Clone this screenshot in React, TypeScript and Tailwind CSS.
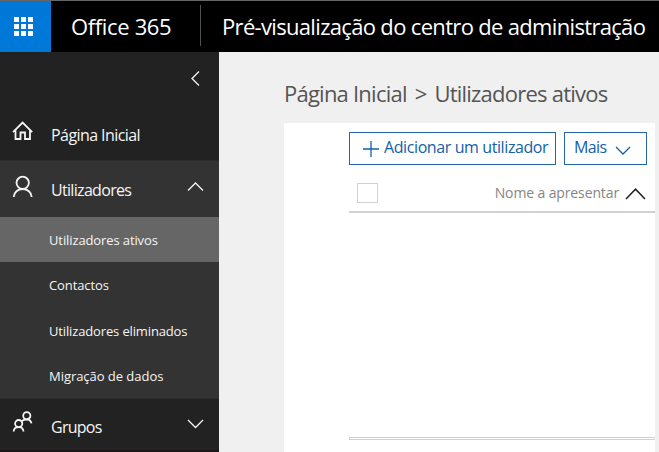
import type { ReactNode } from "react";

const font = "font-['Open_Sans','Noto_Sans',sans-serif]";

function Chevron({ points, w, h, className }: { points: string; w: number; h: number; className: string }) {
  return (
    <svg width={w} height={h} viewBox={`0 0 ${w} ${h}`} fill="none" stroke="currentColor" strokeWidth="1.3" className={className}>
      <polyline points={points} />
    </svg>
  );
}

function SubItem({ children, className }: { children: ReactNode; className: string }) {
  return (
    <li className={`flex items-center pl-[49px] ${className}`}>
      <span className="text-[13px] leading-[18px] whitespace-nowrap text-[#f5f5f5]">{children}</span>
    </li>
  );
}

function Sidebar() {
  return (
    <nav className="w-[219px] shrink-0 bg-[#222222] text-[#f5f5f5]">
      <div className="h-[58px] flex justify-end pt-[19px] pr-[19px]">
        <Chevron w={9} h={15} points="8,0.5 1,7.5 8,14.5" className="block" />
      </div>
      <div className="h-[50px] flex pl-[12px]">
        <svg width="21" height="20" viewBox="0 0 21 20" fill="none" stroke="currentColor" strokeWidth="1.8" className="mt-[11px]">
          <path d="M1 11.2 10.6 1.6 20.2 11.2M3.5 9V18H8.5V11.5H13V18H18V9" />
        </svg>
        <span className="ml-[18px] mt-[14px] text-[16px] leading-[22px] whitespace-nowrap tracking-[-0.57px]">Página Inicial</span>
      </div>
      <div className="h-[57px] flex bg-[#333333] border-t border-[#2d2d2d] pl-[12px] pr-[15px]">
        <svg width="21" height="23" viewBox="0 0 21 23" fill="none" stroke="currentColor" strokeWidth="1.8" className="mt-[14px]">
          <ellipse cx="10.7" cy="7.8" rx="6.2" ry="6.1" />
          <path d="M1.7 22C2 17.3 5.8 14 10.7 14S19.4 17.3 19.7 22" />
        </svg>
        <span className="ml-[18px] mt-[18px] text-[16px] leading-[22px] whitespace-nowrap tracking-[-0.68px]">Utilizadores</span>
        <Chevron w={17} h={10} points="1,8.5 8.5,1 16,8.5" className="ml-auto mt-[21px]" />
      </div>
      <ul className="h-[181px] bg-[#333333]">
        <SubItem className="h-[45px] bg-[#666666] tracking-[-0.11px]">Utilizadores ativos</SubItem>
        <SubItem className="h-[46px] tracking-[-0.11px]">Contactos</SubItem>
        <SubItem className="h-[45px] tracking-[-0.14px]">Utilizadores eliminados</SubItem>
        <SubItem className="h-[45px] tracking-[-0.04px]">Migração de dados</SubItem>
      </ul>
      <div className="h-[54px] flex border-t border-[#2b2b2b] border-b-2 border-b-[#1c1819] pl-[12px] pr-[15px]">
        <svg width="21" height="22" viewBox="0 0 21 22" fill="none" stroke="currentColor" strokeWidth="1.8" className="mt-[12px]">
          <circle cx="14.8" cy="4.7" r="3.6" />
          <circle cx="6.7" cy="12.6" r="3.6" />
          <path d="M9.5 10.2C11 9 12.5 8.3 14.8 8.3 17.5 8.4 19 10 19.5 12.4M1.6 20.5C1.8 18 3.6 16.2 6.7 16.2S11.3 18 11.5 20.5" />
        </svg>
        <span className="ml-[18px] mt-[17px] text-[16px] leading-[22px] whitespace-nowrap tracking-[-0.75px]">Grupos</span>
        <Chevron w={17} h={10} points="1,1 8.5,8.5 16,1" className="ml-auto mt-[20px]" />
      </div>
    </nav>
  );
}

export default function App() {
  return (
    <div className={`${font} w-[659px] h-[452px] overflow-hidden flex flex-col bg-[#f0f0f0]`}>
      <header className="h-[52px] shrink-0 flex bg-black border-t border-[#666666] text-white">
        <div className="w-[51px] bg-[#0078d7] pt-[16px] pl-[14px]">
          <div className="w-[19px] grid grid-cols-3 gap-[2px]">
            {Array.from({ length: 9 }, (_, i) => (
              <i key={i} className="w-[5px] h-[5px] bg-white" />
            ))}
          </div>
        </div>
        <span className="w-[128px] ml-[20px] mt-[9px] text-[22px] leading-[32px] whitespace-nowrap tracking-[-0.35px]">Office 365</span>
        <div className="w-px h-[41px] mt-[4px] ml-px bg-[#505050]" />
        <span className="ml-[21px] mt-[9px] text-[22px] leading-[32px] whitespace-nowrap tracking-[-0.67px]">Pré-visualização do centro de administração</span>
      </header>
      <div className="flex flex-1">
        <Sidebar />
        <main className="flex-1 min-w-0 pl-[65px] pr-[4px] flex flex-col">
          <h1 className="h-[71px] pt-[25px] text-[22px] leading-[32px] whitespace-nowrap tracking-[-0.77px] text-[#555555]">
            Página Inicial <span className="mx-[3px]">&gt;</span> Utilizadores ativos
          </h1>
          <section className="flex-1 bg-white pl-[65px] pt-[9px]">
            <div className="flex gap-[8px] text-[#1261a7]">
              <button className="w-[207px] h-[33px] border border-[#2467a5] flex pl-[13px]">
                <svg width="16" height="16" viewBox="0 0 16 16" stroke="currentColor" strokeWidth="1.3" className="mt-[8px] shrink-0">
                  <path d="M0 8H16M8 0V16" />
                </svg>
                <span className="ml-[5px] mt-[3px] text-[16px] leading-[22px] whitespace-nowrap tracking-[-0.4px]">Adicionar um utilizador</span>
              </button>
              <button className="w-[83px] h-[33px] border border-[#2467a5] flex pl-[9px]">
                <span className="w-[41px] mt-[3px] text-left text-[16px] leading-[22px] whitespace-nowrap tracking-[-0.6px]">Mais</span>
                <Chevron w={16} h={9} points="1,1 8,8 15,1" className="mt-[13px]" />
              </button>
            </div>
            <div className="h-[48px] flex border-b-2 border-[#d2d2d2] pl-[8px] pr-[9px]">
              <div className="w-[21px] h-[20px] mt-[18px] border border-[#d2d2d2] bg-white" />
              <span className="ml-auto mt-[18px] text-[14px] leading-[20px] whitespace-nowrap tracking-[-0.12px] text-[#858585]">Nome a apresentar</span>
              <svg width="21" height="12" viewBox="0 0 21 12" fill="none" stroke="#222" strokeWidth="1.5" className="ml-[6px] mt-[23px]">
                <polyline points="1,11 10.5,1.2 20,11" />
              </svg>
            </div>
            <div className="mt-[224px] h-[3px] border-y border-l border-[#d0d0d0]" />
          </section>
        </main>
      </div>
    </div>
  );
}
